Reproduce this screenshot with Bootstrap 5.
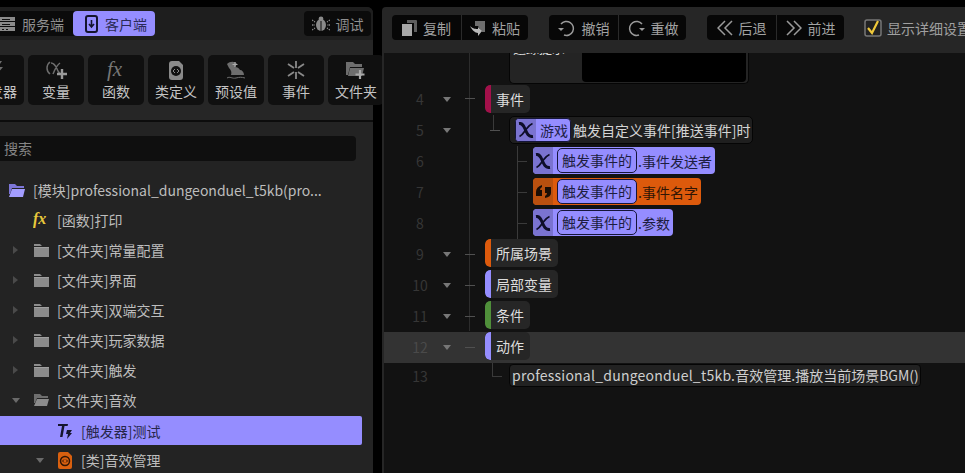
<!DOCTYPE html>
<html lang="zh">
<head>
<meta charset="utf-8">
<title>编辑器</title>
<link href="https://cdn.jsdelivr.net/npm/bootstrap@5.3.0/dist/css/bootstrap.min.css" rel="stylesheet">
<style>
html,body{height:473px;overflow:hidden;background:#000;margin:0}
body{font-family:"Noto Sans CJK SC","Noto Sans",sans-serif;font-size:14px;line-height:20px;color:#bdbdbd}
.shell{height:473px;padding-top:7px;gap:9px}
.sidepane{width:373px;flex:none;background:#232323;border-radius:0 6px 0 0}
.tabbar{height:33px;background:#1e1e1e;padding:4px 2px 0 0;justify-content:space-between;border-radius:0 6px 0 0}
.tabgroup{height:25px;background:#0b0b0b;border-radius:0 4px 4px 0}
.tabitem{height:25px;display:flex;align-items:center;gap:7px;color:#8f8f8f}
.tab-server{width:73px}
.tab-client{width:82px;padding-left:12px;background:#958dff;color:#2a2a55;border-radius:4px;gap:7px}
.tab-debug{width:67px;height:25px;background:#0b0b0b;border-radius:4px;justify-content:center;gap:6px;color:#8f8f8f;display:flex;align-items:center}
.toolzone{height:82px;background:#262626;padding:15px 0;gap:4px;margin-left:-32px;width:405px;border-bottom:2px solid #0c0c0c}
.toolbtn{width:56px;height:50px;flex:none;background:#101010;border-radius:5px;display:flex;flex-direction:column;align-items:center;color:#c4c4c4;padding-top:4px;line-height:20px}
.toolbtn svg{height:22px;display:block}
.searchbox{height:25px;margin:14px 17px 14px 0;background:#0f0f0f;border-radius:0 4px 4px 0;padding-left:4px;line-height:25px;color:#858585}
.treerow{height:30px;display:flex;align-items:center;white-space:nowrap}
.caretcell{width:15px;flex:none;display:flex;justify-content:center}
.iconcell{width:16px;height:16px;flex:none;margin-right:8px;display:flex;align-items:center;justify-content:center}
.d0{padding-left:9px}.d1{padding-left:33px}.d1c{padding-left:8px}.d1c .caretcell{margin-right:10px}
.d2{padding-left:57px}.d2c{padding-left:32px}.d2c .caretcell{margin-right:10px}
.rowpick{background:#958dff;color:#26264a;width:362px;height:29px;border-radius:0 2px 2px 0;margin-top:1px}
.mainpane{flex:1;background:#262626;overflow:hidden;border-radius:4px 0 0 0;min-width:0}
.topbar{height:46px;padding:8px 0 0 10px;gap:21px;flex:none}
.btngrp{height:25px;background:#070707;border-radius:4px;display:flex;color:#a2a2a2}
.btnpart{height:25px;display:flex;align-items:center;gap:6px;justify-content:center;border-left:1px solid #2a2a2a}
.btnpart:first-child{border-left:0}
.showdetail{margin-left:-1px;gap:5px;color:#a0a0a0;height:25px;white-space:nowrap}
.tickbox{width:18px;height:18px;flex:none}
.editor{height:420px;background:#121212;margin-left:2px;position:relative;overflow:hidden}
.guide{position:absolute;left:85px;top:0;width:1px;height:278px;background:#2c2c2c}
.cutcard{height:31px;margin-left:125px;width:240px;background:#242424;border:1px solid #050505;border-top:0;border-radius:0 0 5px 5px;display:flex;position:relative;overflow:hidden;padding-right:2px;padding-bottom:1px}
.cuttext{color:#ddd;line-height:20px;margin-top:-15px;height:18px;overflow:hidden;padding-left:3px;width:72px;flex:none;font-size:13px}
.cutblack{flex:1;background:#000;border-radius:0 0 4px 4px}
.cline{height:31px;display:flex;position:relative}
.cline.hot{background:#333}
.cline.hot .lnum{color:#4a4a4a}
.cline.lastline{height:27px}
.lnum{width:50px;padding-left:22px;text-align:center;color:#363636;line-height:30px;flex:none}
.lastline .lnum{line-height:27px}
.fold{width:26px;flex:none;display:flex;justify-content:center;align-items:center}
.treepart{flex:1;position:relative}
.lab{position:absolute;left:25px;top:1px;height:28px;background:#262626;border-radius:5px;display:flex;align-items:center;overflow:hidden;color:#ddd;padding-right:6px}
.lab i{width:6px;height:28px;margin-right:5px;display:block;border-radius:5px 0 0 5px}
.hline{position:absolute;height:1px;background:#505050}
.vline{position:absolute;width:1px;background:#3a3a3a}
.flat{top:0}
.nodebox{position:absolute;top:1px;height:28px;left:49px;width:244px;background:#1f1f1f;border:1px solid #050505;border-radius:5px;display:flex;align-items:center;color:#d4d4d4;white-space:nowrap;padding-left:5px}
.chip{height:24px;background:#958dff;border:1px solid #15153a;border-radius:4px;display:flex;align-items:center;color:#22224a;overflow:hidden;margin-right:2px;padding-right:2px}
.chip b{width:20px;height:24px;background:#7a73d0;display:flex;align-items:center;justify-content:center;margin-right:4px}
.expr{position:absolute;top:1px;left:73px;height:27px;border-radius:4px;background:#958dff;display:flex;align-items:center;overflow:hidden;color:#1d1d40;white-space:nowrap;padding-right:3px}
.expr.warm{background:#dd5a0c;color:#301505}
.expr>b{width:20px;height:27px;background:#7a73d0;display:flex;align-items:center;justify-content:center;margin-right:4px}
.expr.warm>b{background:#b9500f}
.intag{height:25px;line-height:22px;background:#958dff;border:1px solid #15153a;border-radius:5px;padding:0 4px;margin-right:1px;color:#1d1d40}
.callbox{position:absolute;left:49px;top:1px;height:23px;width:412px;background:#222;border:1px solid #050505;border-radius:4px;color:#cfcfcf;padding:0 2px;line-height:21px;white-space:nowrap}
.widen{letter-spacing:.23px}
</style>
</head>
<body>
<svg width="0" height="0" class="d-none"><defs>
<symbol id="xmark" viewBox="0 0 16 16"><path d="M1 1.500c4-.5 5 3 6.500 6.500s3 7 7.500 6.500" fill="none" stroke="#0e0e2a" stroke-width="3"/><path d="M14.500 1.500C11 3 9 6 7.500 8S4.500 13 1.500 14.500" fill="none" stroke="#0e0e2a" stroke-width="1.800"/></symbol>
<symbol id="fold1" viewBox="0 0 15 13"><path fill="#8c8c8c" d="M0 0h6l2 2H0zM0 3h15v10H0z"/><path fill="#a0a0a0" d="M0 3h15v1H0z"/></symbol>
<symbol id="rcaret" viewBox="0 0 5 8"><path fill="#4a4a4a" d="M0 0l5 4-5 4z"/></symbol>
<symbol id="dcaret" viewBox="0 0 8 5"><path fill="#777" d="M0 0h8L4 5z"/></symbol>
</defs></svg>
<div class="d-flex shell">
  <aside class="sidepane">
    <div class="d-flex tabbar">
      <div class="d-flex tabgroup">
        <div class="tabitem tab-server">
          <svg width="15" height="16" viewBox="0 0 15 16"><path fill="#8a8a8a" d="M0 1h15v4H0zM0 6h15v4H0zM0 11h15v4H0z"/><path fill="#111" d="M2 13h2v1H2zM6 13h2v1H6zM2 3h8v1H2zM2 8h8v1H2z"/></svg>
          <span>服务端</span>
        </div>
        <div class="tabitem tab-client">
          <svg width="13" height="18" viewBox="0 0 13 18"><rect x="1" y="1" width="11" height="16" rx="2" fill="none" stroke="#14142e" stroke-width="2"/><path d="M6.500 5v6M4 9l2.500 3L9 9" fill="none" stroke="#14142e" stroke-width="1.600"/></svg>
          <span>客户端</span>
        </div>
      </div>
      <div class="tab-debug">
        <svg width="18" height="16" viewBox="0 0 18 16"><ellipse cx="9" cy="9" rx="5" ry="6" fill="#8a8a8a"/><circle cx="9" cy="3" r="2.400" fill="#8a8a8a"/><path d="M9 5v10" stroke="#0b0b0b"/><path d="M0 4l3 2M0 9h3M0 14l3-2M18 4l-3 2M18 9h-3M18 14l-3-2" stroke="#8a8a8a" stroke-width="1.300" stroke-dasharray="1.500 1"/></svg>
        <span>调试</span>
      </div>
    </div>
    <div class="d-flex toolzone">
      <div class="toolbtn"><svg width="24" viewBox="0 0 24 22"><path fill="#6e6e6e" d="M6 2h12l-4 6h5L9 20l3-8H7z"/></svg><span>触发器</span></div>
      <div class="toolbtn"><svg width="26" viewBox="0 0 26 22"><path d="M7 3C3 6 3 12 7 15M8 4c4 0 5 4 7 8l2 3M17 4c-3 2-5 6-7 11" fill="none" stroke="#6e6e6e" stroke-width="1.500"/><path d="M19 10v10M14 15h10" stroke="#9a9a9a" stroke-width="2.400"/></svg><span>变量</span></div>
      <div class="toolbtn"><svg width="24" viewBox="0 0 24 22"><text x="3" y="17" font-family="Liberation Serif,serif" font-style="italic" font-size="21" fill="#777">fx</text></svg><span>函数</span></div>
      <div class="toolbtn"><svg width="16" viewBox="0 0 16 22"><path fill="#8a8a8a" d="M1 5q0-3 3-3h7l4 4v12q0 3-3 3H4q-3 0-3-3z"/><circle cx="8" cy="12" r="5" fill="#111"/><path d="M7 10l-2 2 2 2M9 10l2 2-2 2" fill="none" stroke="#8a8a8a" stroke-width="1"/></svg><span>类定义</span></div>
      <div class="toolbtn"><svg width="20" viewBox="0 0 20 22"><path fill="#6e6e6e" d="M1 5c3-3 8-3 10 0l-2 3c2 0 4 1 5 3 2 0 4 2 4 5H5c1-3 0-5-2-7z"/><path d="M9 3v5M6.500 5.500h5" stroke="#aaa" stroke-width="1.200"/><path d="M1 19c3-2 5 1 9 0s5-1 9 0" stroke="#6e6e6e" fill="none"/></svg><span>预设值</span></div>
      <div class="toolbtn"><svg width="18" viewBox="0 0 18 22"><path d="M9 2v7M9 13v7M1 5l6 4M11 13l6 4M17 5l-6 4M7 13l-6 4" stroke="#8a8a8a" stroke-width="1.800"/></svg><span>事件</span></div>
      <div class="toolbtn"><svg width="20" viewBox="0 0 20 22"><path fill="#6e6e6e" d="M0 3h7l2 2h7v3H4l-2 8H0z"/><path fill="#6e6e6e" d="M4 9h14l-2 8H2z"/><path d="M14 11v9M9.500 15.500h9" stroke="#aaa" stroke-width="2.200"/></svg><span>文件夹</span></div>
    </div>
    <div class="searchbox">搜索</div>
    <div class="treerow d0"><span class="iconcell"><svg width="16" height="13" viewBox="0 0 16 13"><path fill="#7d76d8" d="M0 0h6l2 2h7v2H3L1 10H0z"/><path fill="#a39dff" d="M3 5h13l-2 8H0z"/></svg></span><span>[模块]professional_dungeonduel_t5kb(pro...</span></div>
    <div class="treerow d1"><span class="iconcell"><svg width="18" height="18" viewBox="0 0 18 18"><text x="0" y="14" font-family="Liberation Serif,serif" font-style="italic" font-weight="700" font-size="18" fill="#e8c93c">fx</text></svg></span><span>[函数]打印</span></div>
    <div class="treerow d1c"><span class="caretcell"><svg width="5" height="8"><use href="#rcaret"/></svg></span><span class="iconcell"><svg width="15" height="13"><use href="#fold1"/></svg></span><span>[文件夹]常量配置</span></div>
    <div class="treerow d1c"><span class="caretcell"><svg width="5" height="8"><use href="#rcaret"/></svg></span><span class="iconcell"><svg width="15" height="13"><use href="#fold1"/></svg></span><span>[文件夹]界面</span></div>
    <div class="treerow d1c"><span class="caretcell"><svg width="5" height="8"><use href="#rcaret"/></svg></span><span class="iconcell"><svg width="15" height="13"><use href="#fold1"/></svg></span><span>[文件夹]双端交互</span></div>
    <div class="treerow d1c"><span class="caretcell"><svg width="5" height="8"><use href="#rcaret"/></svg></span><span class="iconcell"><svg width="15" height="13"><use href="#fold1"/></svg></span><span>[文件夹]玩家数据</span></div>
    <div class="treerow d1c"><span class="caretcell"><svg width="5" height="8"><use href="#rcaret"/></svg></span><span class="iconcell"><svg width="15" height="13"><use href="#fold1"/></svg></span><span>[文件夹]触发</span></div>
    <div class="treerow d1c"><span class="caretcell"><svg width="8" height="5" viewBox="0 0 8 5"><path fill="#6a6a6a" d="M0 0h8L4 5z"/></svg></span><span class="iconcell"><svg width="15" height="12" viewBox="0 0 15 12"><path fill="#6e6e6e" d="M0 0h6l2 2h6v2H3L1 9H0z"/><path fill="#8c8c8c" d="M3 5h12l-2 7H0z"/></svg></span><span>[文件夹]音效</span></div>
    <div class="treerow d2 rowpick"><span class="iconcell"><svg width="16" height="16" viewBox="0 0 16 16"><path fill="#15152e" d="M1 1h10l-.4 2H7.500L5.500 14H3L5 3H1z"/><path fill="#15152e" d="M10 7h5l-2 3h2l-5 6 1-5H9z"/></svg></span><span>[触发器]测试</span></div>
    <div class="treerow d2c"><span class="caretcell"><svg width="8" height="5" viewBox="0 0 8 5"><path fill="#6a6a6a" d="M0 0h8L4 5z"/></svg></span><span class="iconcell"><svg width="16" height="17" viewBox="0 0 16 17"><path fill="#d9600f" d="M1 2q0-2 2-2h8l4 4v11q0 2-2 2H3q-2 0-2-2z"/><circle cx="8" cy="9" r="4.500" fill="none" stroke="#301505" stroke-width="1.500"/><path d="M7 7.500L5.500 9 7 10.500M9 7.500L10.500 9 9 10.500" fill="none" stroke="#301505"/></svg></span><span>[类]音效管理</span></div>
  </aside>
  <main class="mainpane d-flex flex-column">
    <div class="d-flex topbar">
      <div class="btngrp" style="width:136px">
        <div class="btnpart" style="width:69px"><svg width="15" height="17" viewBox="0 0 15 17"><path fill="#5e5e5e" d="M5 1h9q1 0 1 1v11h-3V4H5z"/><path fill="#a8a8a8" d="M0 5h10v12H0z"/></svg><span>复制</span></div>
        <div class="btnpart" style="width:67px"><svg width="16" height="16" viewBox="0 0 16 16"><path fill="#6e6e6e" d="M5 1h10v11h-3L8 6H5z"/><path fill="#b8b8b8" d="M0 6c3 3 6 3 8 3V7l4 4-4 5v-3C5 13 2 10 0 6z"/></svg><span>粘贴</span></div>
      </div>
      <div class="btngrp" style="width:137px">
        <div class="btnpart" style="width:69px"><svg width="18" height="18" viewBox="0 0 18 18"><path d="M3 5a7 7 0 1 1 3 11" fill="none" stroke="#9a9a9a" stroke-width="1.500"/><path fill="#9a9a9a" d="M0 9h6l-3 3z"/></svg><span>撤销</span></div>
        <div class="btnpart" style="width:68px"><svg width="18" height="18" viewBox="0 0 18 18"><path d="M15 5a7 7 0 1 0-3 11" fill="none" stroke="#9a9a9a" stroke-width="1.500"/><path fill="#9a9a9a" d="M12 9h6l-3 3z"/></svg><span>重做</span></div>
      </div>
      <div class="btngrp" style="width:137px">
        <div class="btnpart" style="width:69px"><svg width="16" height="16" viewBox="0 0 16 16"><path d="M8 1L1 8l7 7M15 1L8 8l7 7" fill="none" stroke="#9a9a9a" stroke-width="1.500"/></svg><span>后退</span></div>
        <div class="btnpart" style="width:68px"><svg width="16" height="16" viewBox="0 0 16 16"><path d="M8 1l7 7-7 7M1 1l7 7-7 7" fill="none" stroke="#9a9a9a" stroke-width="1.500"/></svg><span>前进</span></div>
      </div>
      <div class="d-flex align-items-center showdetail">
        <svg class="tickbox" viewBox="0 0 18 18"><rect x="1" y="1" width="16" height="16" rx="2" fill="#222" stroke="#777" stroke-width="1.500"/><path d="M4 9l4 5 6-12" fill="none" stroke="#f0c93a" stroke-width="2.200"/></svg>
        <span>显示详细设置</span>
      </div>
    </div>
    <div class="editor">
      <span class="guide"></span>
      <div class="cutcard"><span class="cuttext">追踪提示:</span><span class="cutblack"></span></div>
      <div class="cline"><span class="lnum">4</span><span class="fold"><svg width="8" height="5"><use href="#dcaret"/></svg></span><div class="treepart"><span class="hline" style="left:5px;width:10px;top:14px"></span><div class="lab"><i style="background:#a3104a"></i>事件</div></div></div>
      <div class="cline"><span class="lnum">5</span><span class="fold"><svg width="8" height="5"><use href="#dcaret"/></svg></span><div class="treepart"><span class="vline" style="left:33px;top:0;height:15px"></span><span class="hline" style="left:30px;width:10px;top:15px"></span>
        <div class="nodebox"><span class="chip"><b><svg width="16" height="16"><use href="#xmark"/></svg></b>游戏</span>触发自定义事件[推送事件]时</div></div></div>
      <div class="cline"><span class="lnum">6</span><span class="fold"></span><div class="treepart"><span class="vline" style="left:57px;top:0;height:93px"></span><span class="hline" style="left:57px;width:10px;top:15px;background:#3a3a3a"></span>
        <div class="expr"><b><svg width="16" height="16"><use href="#xmark"/></svg></b><span class="intag">触发事件的</span>.事件发送者</div></div></div>
      <div class="cline"><span class="lnum">7</span><span class="fold"></span><div class="treepart"><span class="hline" style="left:57px;width:10px;top:15px;background:#3a3a3a"></span>
        <div class="expr warm"><b><svg width="15" height="13" viewBox="0 0 15 13"><path fill="#1a0d05" d="M0 7q0-5 6-7v2q-2 1-2 3h2v6H0zM9 2h6v6q0 4-6 5v-2q2-1 2-3H9z"/></svg></b><span class="intag">触发事件的</span>.事件名字</div></div></div>
      <div class="cline"><span class="lnum">8</span><span class="fold"></span><div class="treepart"><span class="hline" style="left:57px;width:10px;top:15px;background:#3a3a3a"></span>
        <div class="expr"><b><svg width="16" height="16"><use href="#xmark"/></svg></b><span class="intag">触发事件的</span>.参数</div></div></div>
      <div class="cline"><span class="lnum">9</span><span class="fold"><svg width="8" height="5"><use href="#dcaret"/></svg></span><div class="treepart"><span class="hline" style="left:5px;width:10px;top:15px"></span><div class="lab flat"><i style="background:#dd5a0c"></i>所属场景</div></div></div>
      <div class="cline"><span class="lnum">10</span><span class="fold"><svg width="8" height="5"><use href="#dcaret"/></svg></span><div class="treepart"><span class="hline" style="left:5px;width:10px;top:15px"></span><div class="lab flat"><i style="background:#958dff"></i>局部变量</div></div></div>
      <div class="cline"><span class="lnum">11</span><span class="fold"><svg width="8" height="5"><use href="#dcaret"/></svg></span><div class="treepart"><span class="hline" style="left:5px;width:10px;top:15px"></span><div class="lab flat"><i style="background:#4f8f3a"></i>条件</div></div></div>
      <div class="cline hot"><span class="lnum">12</span><span class="fold"><svg width="8" height="5"><use href="#dcaret"/></svg></span><div class="treepart"><span class="hline" style="left:5px;width:10px;top:15px"></span><div class="lab flat"><i style="background:#958dff"></i>动作</div></div></div>
      <div class="cline lastline"><span class="lnum">13</span><span class="fold"></span><div class="treepart"><span class="vline" style="left:32px;top:0;height:13px"></span><span class="hline" style="left:32px;width:10px;top:13px;background:#3a3a3a"></span><div class="callbox"><span class="widen">professional_dungeonduel_t5kb.</span>音效管理.播放当前场景BGM()</div></div></div>
    </div>
  </main>
</div>
<script src="https://cdn.jsdelivr.net/npm/bootstrap@5.3.0/dist/js/bootstrap.bundle.min.js"></script>
</body>
</html>
